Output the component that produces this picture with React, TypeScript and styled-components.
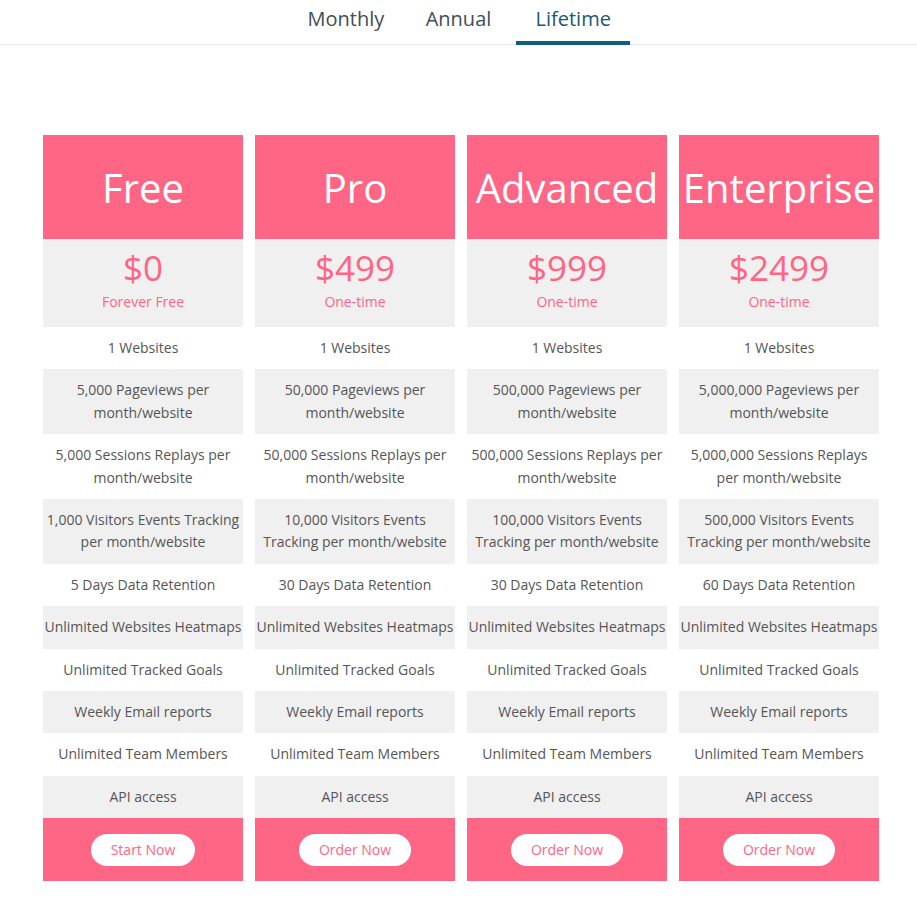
import React from 'react';
import styled, { createGlobalStyle } from 'styled-components';

const GlobalStyle = createGlobalStyle`
  body {
    margin: 0;
    background: #ffffff;
    font-family: 'Open Sans', 'Liberation Sans', sans-serif;
  }
`;

const PINK = '#ff6584';

const TabBar = styled.div`
  display: flex;
  justify-content: center;
  border-bottom: 1px solid #e8e8e8;
  height: 44px;
`;

const Tab = styled.div<{ active?: boolean }>`
  padding: 0 20px;
  font-size: 20px;
  line-height: 38px;
  color: ${({ active }) => (active ? '#1b5872' : '#434d55')};
  border-bottom: 4px solid ${({ active }) => (active ? '#0f6080' : 'transparent')};
  width: 114px;
  box-sizing: border-box;
  text-align: center;
  margin-bottom: -1px;
`;

const Plans = styled.div`
  display: flex;
  padding: 90px 0 0 37px;
`;

const Column = styled.div`
  width: 212px;
  padding: 0 6px;
  box-sizing: border-box;
`;

const Card = styled.div`
  display: flex;
  flex-direction: column;
  text-align: center;
`;

const Header = styled.div`
  background: ${PINK};
  height: 104px;
  display: flex;
  align-items: center;
  justify-content: center;
  color: #ffffff;
  font-size: 40px;
  white-space: nowrap;
`;

const PriceBox = styled.div`
  background: #f0f0f0;
  height: 88px;
  box-sizing: border-box;
  padding-top: 11px;
  display: flex;
  flex-direction: column;
  align-items: center;
  color: ${PINK};
`;

const Price = styled.div`
  font-size: 35px;
  line-height: 36px;
`;

const PriceNote = styled.div`
  font-size: 14px;
  line-height: 16px;
  margin-top: 8px;
`;

const Feature = styled.div<{ shaded?: boolean }>`
  background: ${({ shaded }) => (shaded ? '#f0f0f0' : '#ffffff')};
  color: #555555;
  font-size: 14px;
  line-height: 22.4px;
  padding: 10px 1px;
`;

const Footer = styled.div`
  background: ${PINK};
  height: 63px;
  display: flex;
  align-items: center;
  justify-content: center;
`;

const OrderButton = styled.button`
  background: #ffffff;
  color: ${PINK};
  border: none;
  border-radius: 16px;
  height: 32px;
  padding: 0 20px;
  font-family: inherit;
  font-size: 14px;
  cursor: pointer;
`;

const plans = [
  {
    name: 'Free', price: '$0', note: 'Forever Free', cta: 'Start Now',
    pageviews: '5,000', replays: '5,000', events: '1,000', retention: '5',
  },
  {
    name: 'Pro', price: '$499', note: 'One-time', cta: 'Order Now',
    pageviews: '50,000', replays: '50,000', events: '10,000', retention: '30',
  },
  {
    name: 'Advanced', price: '$999', note: 'One-time', cta: 'Order Now',
    pageviews: '500,000', replays: '500,000', events: '100,000', retention: '30',
  },
  {
    name: 'Enterprise', price: '$2499', note: 'One-time', cta: 'Order Now',
    pageviews: '5,000,000', replays: '5,000,000', events: '500,000', retention: '60',
  },
];

export default function App() {
  return (
    <>
      <GlobalStyle />
      <TabBar>
        <Tab>Monthly</Tab>
        <Tab>Annual</Tab>
        <Tab active>Lifetime</Tab>
      </TabBar>
      <Plans>
        {plans.map((p) => {
          const features = [
            '1 Websites',
            `${p.pageviews} Pageviews per month/website`,
            `${p.replays} Sessions Replays per month/website`,
            `${p.events} Visitors Events Tracking per month/website`,
            `${p.retention} Days Data Retention`,
            'Unlimited Websites Heatmaps',
            'Unlimited Tracked Goals',
            'Weekly Email reports',
            'Unlimited Team Members',
            'API access',
          ];
          return (
            <Column key={p.name}>
              <Card>
                <Header>{p.name}</Header>
                <PriceBox>
                  <Price>{p.price}</Price>
                  <PriceNote>{p.note}</PriceNote>
                </PriceBox>
                {features.map((f, i) => (
                  <Feature key={i} shaded={i % 2 === 1}>{f}</Feature>
                ))}
                <Footer>
                  <OrderButton>{p.cta}</OrderButton>
                </Footer>
              </Card>
            </Column>
          );
        })}
      </Plans>
    </>
  );
}
